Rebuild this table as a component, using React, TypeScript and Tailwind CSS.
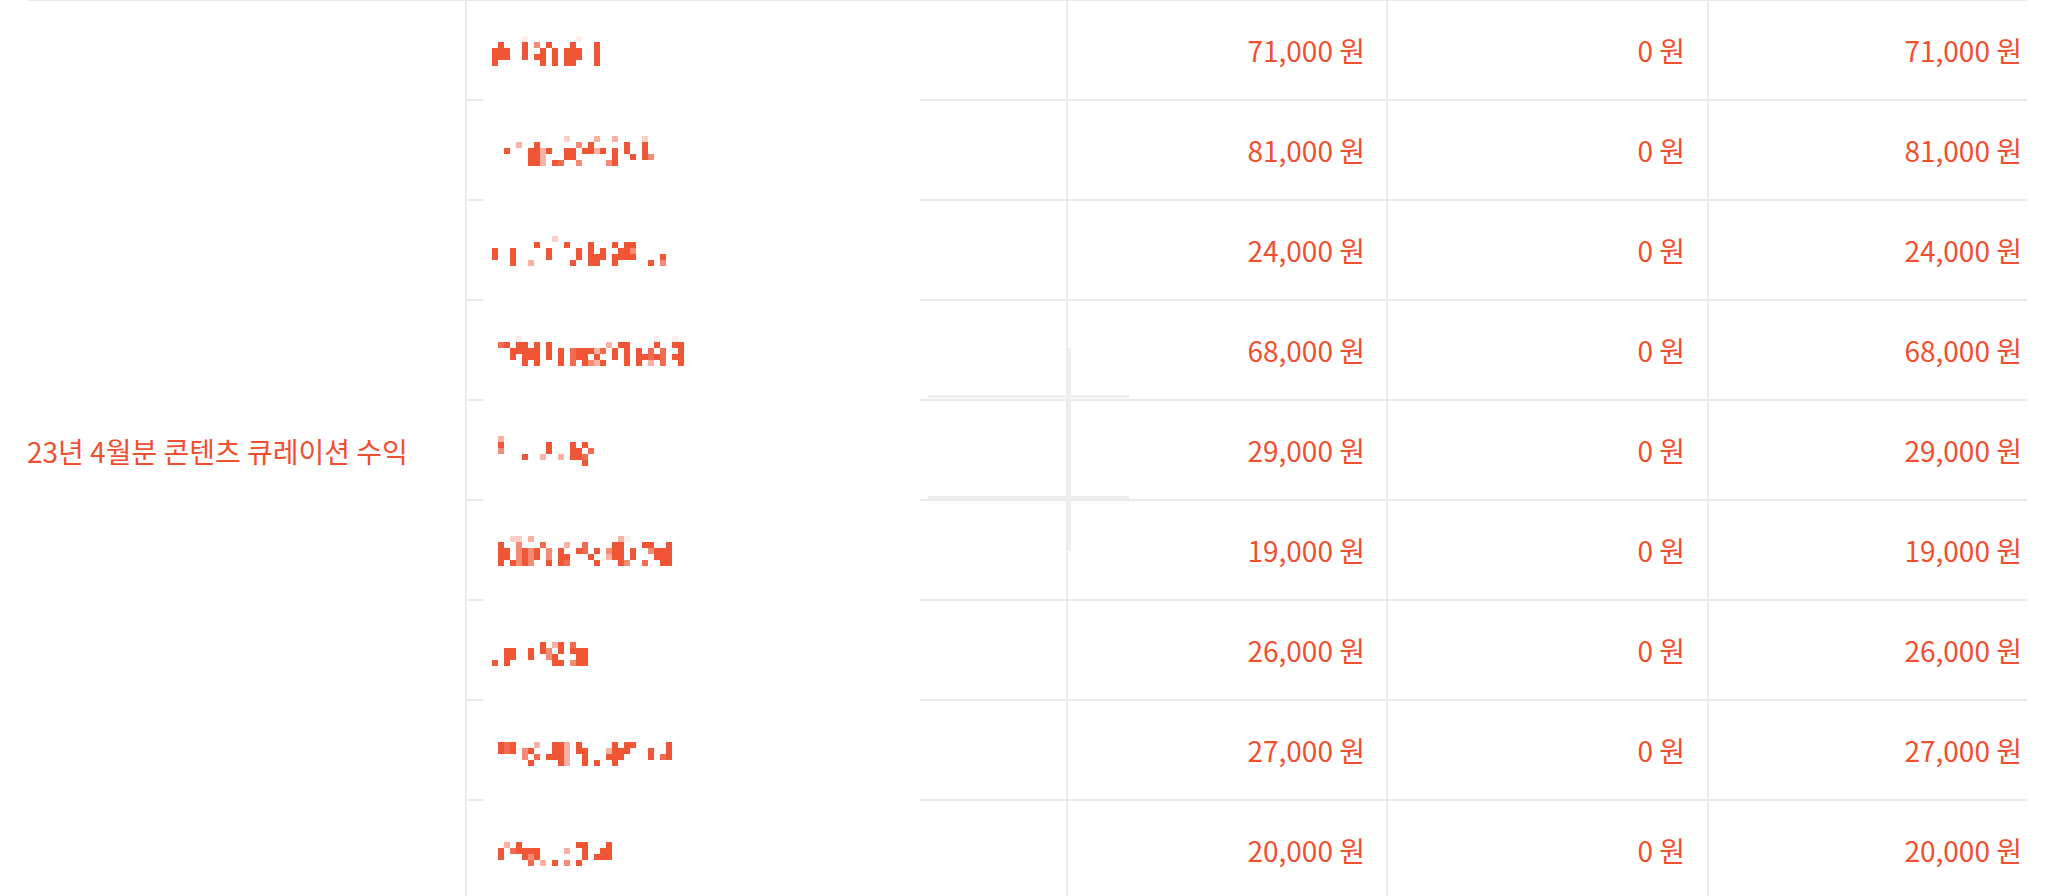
const rows = [
  { cols: 20, seed: 11, amount: "71,000", fee: "0", total: "71,000" },
  { cols: 27, seed: 23, amount: "81,000", fee: "0", total: "81,000" },
  { cols: 30, seed: 37, amount: "24,000", fee: "0", total: "24,000" },
  { cols: 33, seed: 41, amount: "68,000", fee: "0", total: "68,000" },
  { cols: 17, seed: 53, amount: "29,000", fee: "0", total: "29,000" },
  { cols: 31, seed: 67, amount: "19,000", fee: "0", total: "19,000" },
  { cols: 16, seed: 71, amount: "26,000", fee: "0", total: "26,000" },
  { cols: 30, seed: 83, amount: "27,000", fee: "0", total: "27,000" },
  { cols: 20, seed: 97, amount: "20,000", fee: "0", total: "20,000" },
];

function mulberry32(a: number) {
  return function () {
    let t = (a += 0x6d2b79f5);
    t = Math.imul(t ^ (t >>> 15), t | 1);
    t ^= t + Math.imul(t ^ (t >>> 7), t | 61);
    return ((t ^ (t >>> 14)) >>> 0) / 4294967296;
  };
}

const strong = ["#f05536", "#f05536", "#f05536", "#f05536", "#f26a4f", "#f58a75", "#f9b2a4"];
const light = ["#fcd0c7", "#feeeea", "#f9b2a4"];

// pixelated (censored) name, drawn as a mosaic
function Mosaic({ cols, seed }: { cols: number; seed: number }) {
  const rand = mulberry32(seed);
  const cells: { x: number; y: number; fill: string }[] = [];
  const pick = (pal: string[]) => pal[Math.floor(rand() * pal.length)];
  for (let c = 0; c < cols; c++) {
    const k = rand();
    if (k < 0.2) continue;
    if (k < 0.55) {
      // vertical stroke
      const start = 1 + Math.floor(rand() * 2);
      const len = 2 + Math.floor(rand() * (5 - start - 1));
      const fill = rand() < 0.75 ? "#f05536" : pick(strong);
      for (let r = start; r < Math.min(5, start + len); r++) cells.push({ x: c * 6, y: r * 6, fill });
      if (rand() < 0.15) cells.push({ x: c * 6, y: 0, fill: pick(light) });
    } else {
      for (let r = 0; r < 5; r++) {
        const p = r === 0 ? 0.08 : 0.3;
        if (rand() < p) cells.push({ x: c * 6, y: r * 6, fill: pick(r === 0 ? light : strong) });
      }
    }
  }
  return (
    <svg width={cols * 6} height={30} viewBox={`0 0 ${cols * 6} 30`} className="block">
      {cells.map((p, i) => (
        <rect key={i} x={p.x} y={p.y} width={6} height={6} fill={p.fill} />
      ))}
    </svg>
  );
}

export default function App() {
  return (
    <div className="h-[896px] w-[2058px] overflow-hidden bg-white font-['Noto_Sans_CJK_KR','Noto_Sans',sans-serif] text-[#f04f30]">
      <div className="relative w-[2027px] overflow-hidden pl-[27px]">
        <div className="flex w-[2017px] border-t border-[#ebebeb]">
          <div className="flex w-[438px] shrink-0 items-center text-[28px] leading-none">
            23년 4월분 콘텐츠 큐레이션 수익
          </div>
          <div className="flex flex-col">
            {rows.map((r, i) => (
              <div key={i} className="flex h-[100px] text-[28px] leading-none">
                <div className="flex w-[601px] shrink-0 flex-col border-l-2 border-[#ebebeb]">
                  <div className="flex flex-1 items-center pl-[25px] pt-[2px]">
                    <Mosaic cols={r.cols} seed={r.seed} />
                  </div>
                  <div className="flex h-[2px]">
                    <div className="w-[17px] bg-[#ebebeb]" />
                    <div className="w-[436px]" />
                    <div className="flex-1 bg-[#ebebeb]" />
                  </div>
                </div>
                <div className="flex w-[320px] shrink-0 items-center justify-end border-b-2 border-l-2 border-[#ebebeb] pr-[21px]">
                  {r.amount} 원
                </div>
                <div className="flex w-[321px] shrink-0 items-center justify-end border-b-2 border-l-2 border-[#ebebeb] pr-[22px]">
                  {r.fee} 원
                </div>
                <div className="flex w-[337px] shrink-0 items-center justify-end border-b-2 border-l-2 border-[#ebebeb] pr-[22px]">
                  {r.total} 원
                </div>
              </div>
            ))}
          </div>
        </div>
        {/* faint box left over from the pasted mosaic */}
        <div className="pointer-events-none absolute left-[928px] top-[395px] h-[104px] w-[201px] border-y-[3px] border-[#efefef]" />
        <div className="pointer-events-none absolute left-[1068px] top-[348px] h-[203px] w-[3px] bg-[#efefef]" />
      </div>
    </div>
  );
}
